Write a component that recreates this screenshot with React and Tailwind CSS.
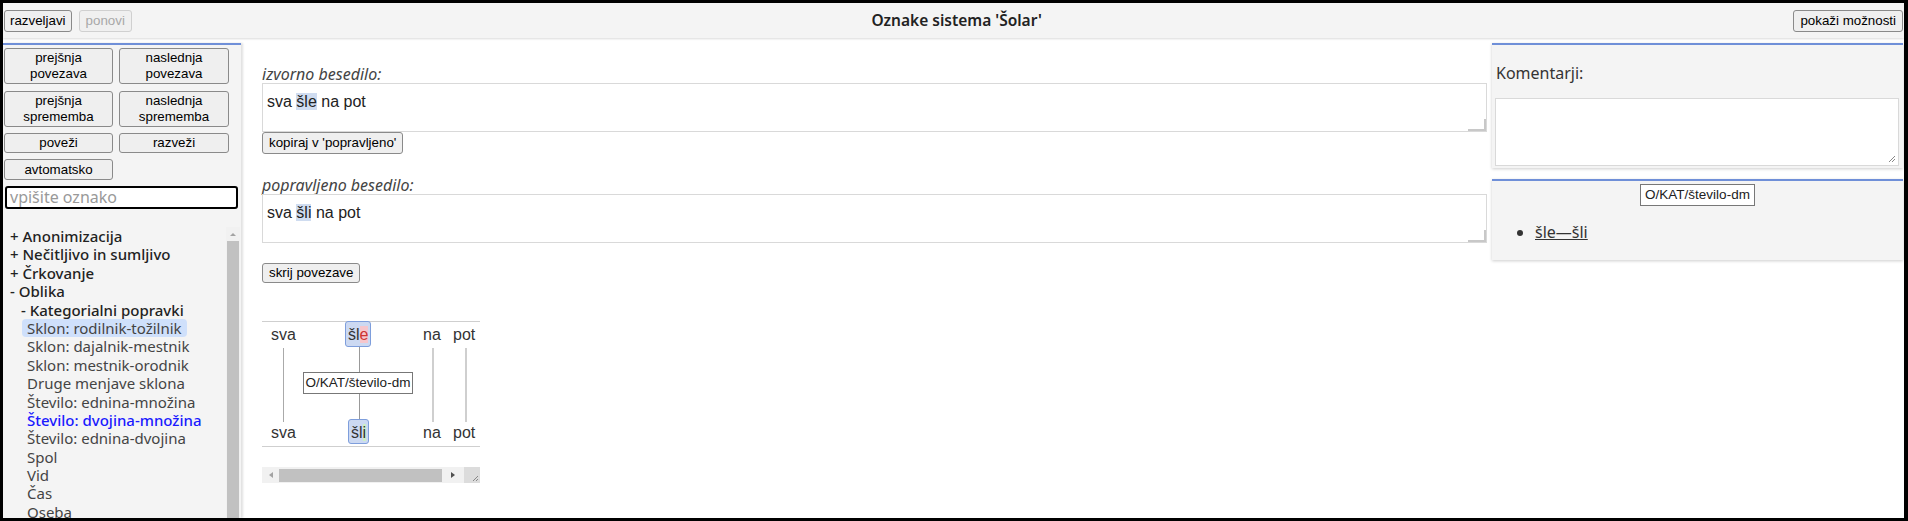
import React from "react";

const ui = { fontFamily: '"Noto Sans", "Open Sans", sans-serif' };
const arial = { fontFamily: '"Liberation Sans", Arial, sans-serif' };

const btn =
  "bg-[#efefef] border border-[#8a8a8a] rounded-[3px] text-[13.33px] leading-[16px] text-black";

const tree = [
  { t: "+ Anonimizacija", lvl: 0 },
  { t: "+ Nečitljivo in sumljivo", lvl: 0 },
  { t: "+ Črkovanje", lvl: 0 },
  { t: "- Oblika", lvl: 0 },
  { t: "- Kategorialni popravki", lvl: 1 },
  { t: "Sklon: rodilnik-tožilnik", lvl: 2, sel: true },
  { t: "Sklon: dajalnik-mestnik", lvl: 2 },
  { t: "Sklon: mestnik-orodnik", lvl: 2 },
  { t: "Druge menjave sklona", lvl: 2 },
  { t: "Število: ednina-množina", lvl: 2 },
  { t: "Število: dvojina-množina", lvl: 2, active: true },
  { t: "Število: ednina-dvojina", lvl: 2 },
  { t: "Spol", lvl: 2 },
  { t: "Vid", lvl: 2 },
  { t: "Čas", lvl: 2 },
  { t: "Oseba", lvl: 2 },
];

function Grip() {
  return (
    <svg width="9" height="9" viewBox="0 0 9 9" className="absolute right-[2px] bottom-[2px]">
      <path d="M8 2 L2 8 M8 5 L5 8" stroke="#888" strokeWidth="1" />
    </svg>
  );
}

function TextBox({ before, mark, after }) {
  return (
    <div className="relative h-[49px] border border-[#d9d9d9] bg-white px-[4px] pt-[6px]" style={arial}>
      <span className="text-[16px] leading-[20px] text-[#222]">
        {before}
        <span className="bg-[#cfdcf0]">{mark}</span>
        {after}
      </span>
      <div className="absolute right-0 bottom-0 w-[18px] h-[12px] border-r-2 border-b-2 border-[#c8c8c8]" />
    </div>
  );
}

function Diagram() {
  const word = "absolute text-[16px] leading-[20px] text-[#333]";
  return (
    <div className="relative w-[218px] h-[162px]" style={arial}>
      <div className="absolute left-0 right-0 top-0 h-px bg-[#cfcfcf]" />
      <div className="absolute left-0 right-0 top-[125px] h-px bg-[#cfcfcf]" />
      {/* top row */}
      <span className={`${word} left-[9px] top-[4px]`}>sva</span>
      <span className={`${word} left-[83px] top-0 h-[26px] w-[26px] pt-[3px] pl-[2px] bg-[#ccd9f2] border border-[#7e9edc] rounded-[3px]`}>
        šl<span className="bg-[#f6c6cc] text-[#c33]">e</span>
      </span>
      <span className={`${word} left-[161px] top-[4px]`}>na</span>
      <span className={`${word} left-[191px] top-[4px]`}>pot</span>
      {/* links */}
      <div className="absolute left-[21px] top-[27px] w-px h-[74px] bg-[#aaa]" />
      <div className="absolute left-[97px] top-[26px] w-px h-[72px] bg-[#999]" />
      <div className="absolute left-[170px] top-[27px] w-[2px] h-[74px] bg-[#cfcfcf]" />
      <div className="absolute left-[203px] top-[27px] w-[2px] h-[74px] bg-[#cfcfcf]" />
      <div className="absolute left-[41px] top-[51px] w-[110px] h-[22px] border border-[#777] bg-white text-[13.5px] leading-[20px] text-center text-[#222]">
        O/KAT/število-dm
      </div>
      {/* bottom row */}
      <span className={`${word} left-[9px] top-[102px]`}>sva</span>
      <span className={`${word} left-[86px] top-[98px] h-[25px] w-[21px] pt-[3px] pl-[2px] bg-[#ccd9f2] border border-[#7e9edc] rounded-[3px]`}>
        šl<span className="bg-[#cdf0c4]">i</span>
      </span>
      <span className={`${word} left-[161px] top-[102px]`}>na</span>
      <span className={`${word} left-[191px] top-[102px]`}>pot</span>
      {/* horizontal scrollbar */}
      <div className="absolute left-0 top-[146px] w-[218px] h-[16px] bg-[#f1f1f1] flex items-center">
        <svg width="17" height="16" viewBox="0 0 17 16"><path d="M11 5 L7 8 L11 11 Z" fill="#a3a3a3" /></svg>
        <div className="h-[13px] w-[163px] bg-[#c1c1c1]" />
        <svg width="22" height="16" viewBox="0 0 22 16"><path d="M9 5 L13 8 L9 11 Z" fill="#505050" /></svg>
        <div className="relative w-[16px] h-[16px] bg-[#dcdcdc]">
          <svg width="16" height="16" viewBox="0 0 16 16" className="absolute inset-0">
            <path d="M14 9 L9 14 M14 12 L12 14" stroke="#888" strokeWidth="1" />
          </svg>
        </div>
      </div>
    </div>
  );
}

export default function App() {
  return (
    <div
      className="w-[1908px] h-[521px] border-t-[3px] border-l-[3px] border-b-[3px] border-r-[4px] border-black bg-white flex flex-col overflow-hidden"
      style={ui}
    >
      {/* header */}
      <div className="h-[35px] shrink-0 bg-[#f4f4f4] shadow-[0_1px_2px_rgba(0,0,0,0.15)] flex items-center px-[1px] relative">
        <div className="flex gap-[7px]" style={arial}>
          <button className={`${btn} h-[22px] px-[5px]`}>razveljavi</button>
          <button className="h-[22px] px-[6px] bg-[#f0f0f0] border border-[#d0d0d0] rounded-[3px] text-[13.33px] text-[#a8a8a8]">
            ponovi
          </button>
        </div>
        <div className="flex-1 text-center text-[15.5px] font-semibold text-[#222] pr-[12px]">
          Oznake sistema 'Šolar'
        </div>
        <button className={`${btn} h-[22px] px-[6px]`} style={arial}>
          pokaži možnosti
        </button>
      </div>

      <div className="flex flex-1 min-h-0 pt-[5px]">
        {/* left panel */}
        <div className="w-[238px] shrink-0 bg-[#f4f4f4] border-t-2 border-[#6f8fd8] shadow-[2px_0_2px_rgba(0,0,0,0.12)] flex flex-col min-h-0">
          <div className="pl-[1px] pt-[3px]" style={arial}>
            <div className="grid grid-cols-[109px_110px] gap-x-[6px]">
              <button className={`${btn} h-[36px]`}>prejšnja<br />povezava</button>
              <button className={`${btn} h-[36px]`}>naslednja<br />povezava</button>
              <button className={`${btn} h-[36px] mt-[7px]`}>prejšnja<br />sprememba</button>
              <button className={`${btn} h-[36px] mt-[7px]`}>naslednja<br />sprememba</button>
              <button className={`${btn} h-[20px] mt-[6px]`}>poveži</button>
              <button className={`${btn} h-[20px] mt-[6px]`}>razveži</button>
              <button className={`${btn} h-[21px] mt-[6px]`}>avtomatsko</button>
            </div>
            <div className="mt-[6px] ml-[1px] w-[233px] h-[23px] bg-white border-2 border-black rounded-[3px] px-[3px] text-[16px] leading-[19px] text-[#999]" style={ui}>
              vpišite oznako
            </div>
          </div>
          <div className="flex flex-1 min-h-0 mt-[18px]">
            <div className="flex-1 pl-[7px] overflow-hidden">
              {tree.map((it) => (
                <div
                  key={it.t}
                  className={`h-[18.4px] leading-[18.4px] text-[15px] whitespace-nowrap ${
                    it.lvl === 0 ? "font-medium text-[#222]" : it.lvl === 1 ? "font-medium text-[#222] pl-[11px]" : "pl-[17px]"
                  }`}
                >
                  <span
                    className={`${
                      it.sel ? "bg-[#cfe0fb] rounded-[4px] px-[5px] -ml-[5px] inline-block" : ""
                    } ${it.active ? "text-[#1a1aff] font-medium" : it.lvl === 2 ? "text-[#444]" : ""}`}
                  >
                    {it.t}
                  </span>
                </div>
              ))}
            </div>
            <div className="w-[14px] mr-[1px] bg-[#f1f1f1] flex flex-col">
              <svg width="14" height="14" viewBox="0 0 14 14"><path d="M4 9 L7 6 L10 9 Z" fill="#a3a3a3" /></svg>
              <div className="flex-1 bg-[#c1c1c1] mx-[1px]" />
            </div>
          </div>
        </div>

        {/* main */}
        <div className="flex-1 min-w-0 pl-[18px] pr-[5px] pt-[22px] ml-[3px]">
          <div className="italic text-[16px] leading-[18px] text-[#444]">izvorno besedilo:</div>
          <TextBox before="sva " mark="šle" after=" na pot" />
          <button className={`${btn} h-[22px] px-[6px] block`} style={arial}>kopiraj v 'popravljeno'</button>
          <div className="italic text-[16px] leading-[18px] text-[#444] mt-[22px]">popravljeno besedilo:</div>
          <TextBox before="sva " mark="šli" after=" na pot" />
          <button className={`${btn} h-[20px] px-[6px] mt-[20px] block`} style={arial}>skrij povezave</button>
          <div className="mt-[38px]">
            <Diagram />
          </div>
        </div>

        {/* right panel */}
        <div className="w-[411px] shrink-0 mr-[1px] flex flex-col gap-[11px]">
          <div className="bg-[#f4f4f4] border-t-2 border-[#6f8fd8] shadow-[0_1px_3px_rgba(0,0,0,0.2)] pl-[3px] pr-[4px] pb-[2px]">
            <div className="text-[16px] leading-[20px] text-[#333] pt-[18px] pl-[1px]">Komentarji:</div>
            <div className="relative mt-[15px] h-[68px] bg-white border border-[#d9d9d9]">
              <Grip />
            </div>
          </div>
          <div className="bg-[#f4f4f4] border-t-2 border-[#6f8fd8] shadow-[0_1px_3px_rgba(0,0,0,0.2)] h-[81px] pt-[3px]">
            <div className="flex justify-center">
              <div className="h-[22px] px-[4px] border border-[#777] bg-white text-[13.5px] leading-[20px] text-[#222]" style={arial}>
                O/KAT/število-dm
              </div>
            </div>
            <ul className="list-disc pl-[43px] mt-[16px] text-[16px] leading-[20px] text-[#333]">
              <li><span className="underline">šle—šli</span></li>
            </ul>
          </div>
        </div>
      </div>
    </div>
  );
}
